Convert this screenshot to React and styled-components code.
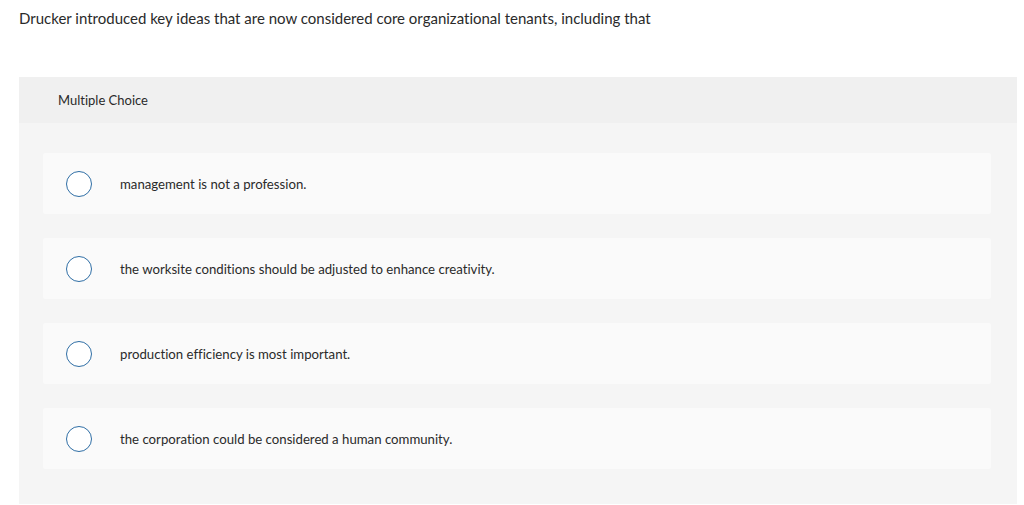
import React from 'react';
import styled, { createGlobalStyle } from 'styled-components';

const GlobalStyle = createGlobalStyle`
  html, body {
    margin: 0;
    padding: 0;
    background: #ffffff;
    font-family: 'Lato', 'Liberation Sans', sans-serif;
    font-variant-ligatures: none;
    color: #2a2a2a;
  }
`;

const Page = styled.div`
  padding: 9px 7px 0 19px;
`;

const Question = styled.p`
  margin: 0;
  font-size: 15px;
  line-height: 19px;
  color: #2a2a2a;
`;

const Panel = styled.div`
  margin-top: 49px;
  background: #f5f5f5;
  padding-bottom: 35px;
`;

const PanelHeader = styled.div`
  height: 46px;
  background: #f0f0f0;
  display: flex;
  align-items: center;
  padding-left: 39px;
  font-size: 13px;
  color: #2a2a2a;
`;

const OptionList = styled.div`
  display: flex;
  flex-direction: column;
  gap: 24px;
  padding: 30px 26px 0 24px;
`;

const Option = styled.label`
  display: flex;
  align-items: center;
  height: 61px;
  background: #fafafa;
  border-radius: 2px;
  padding-left: 23px;
  cursor: pointer;
`;

const Radio = styled.span`
  width: 24px;
  height: 24px;
  border: 1px solid #2f6ea5;
  border-radius: 50%;
  background: #fff;
  flex-shrink: 0;
`;

const OptionText = styled.span`
  margin-left: 28px;
  font-size: 13.2px;
  color: #2a2a2a;
`;

const options = [
  'management is not a profession.',
  'the worksite conditions should be adjusted to enhance creativity.',
  'production efficiency is most important.',
  'the corporation could be considered a human community.',
];

export default function App() {
  return (
    <>
      <GlobalStyle />
      <Page>
        <Question>
          Drucker introduced key ideas that are now considered core organizational tenants, including that
        </Question>
        <Panel>
          <PanelHeader>Multiple Choice</PanelHeader>
          <OptionList>
            {options.map((text) => (
              <Option key={text}>
                <Radio />
                <OptionText>{text}</OptionText>
              </Option>
            ))}
          </OptionList>
        </Panel>
      </Page>
    </>
  );
}
